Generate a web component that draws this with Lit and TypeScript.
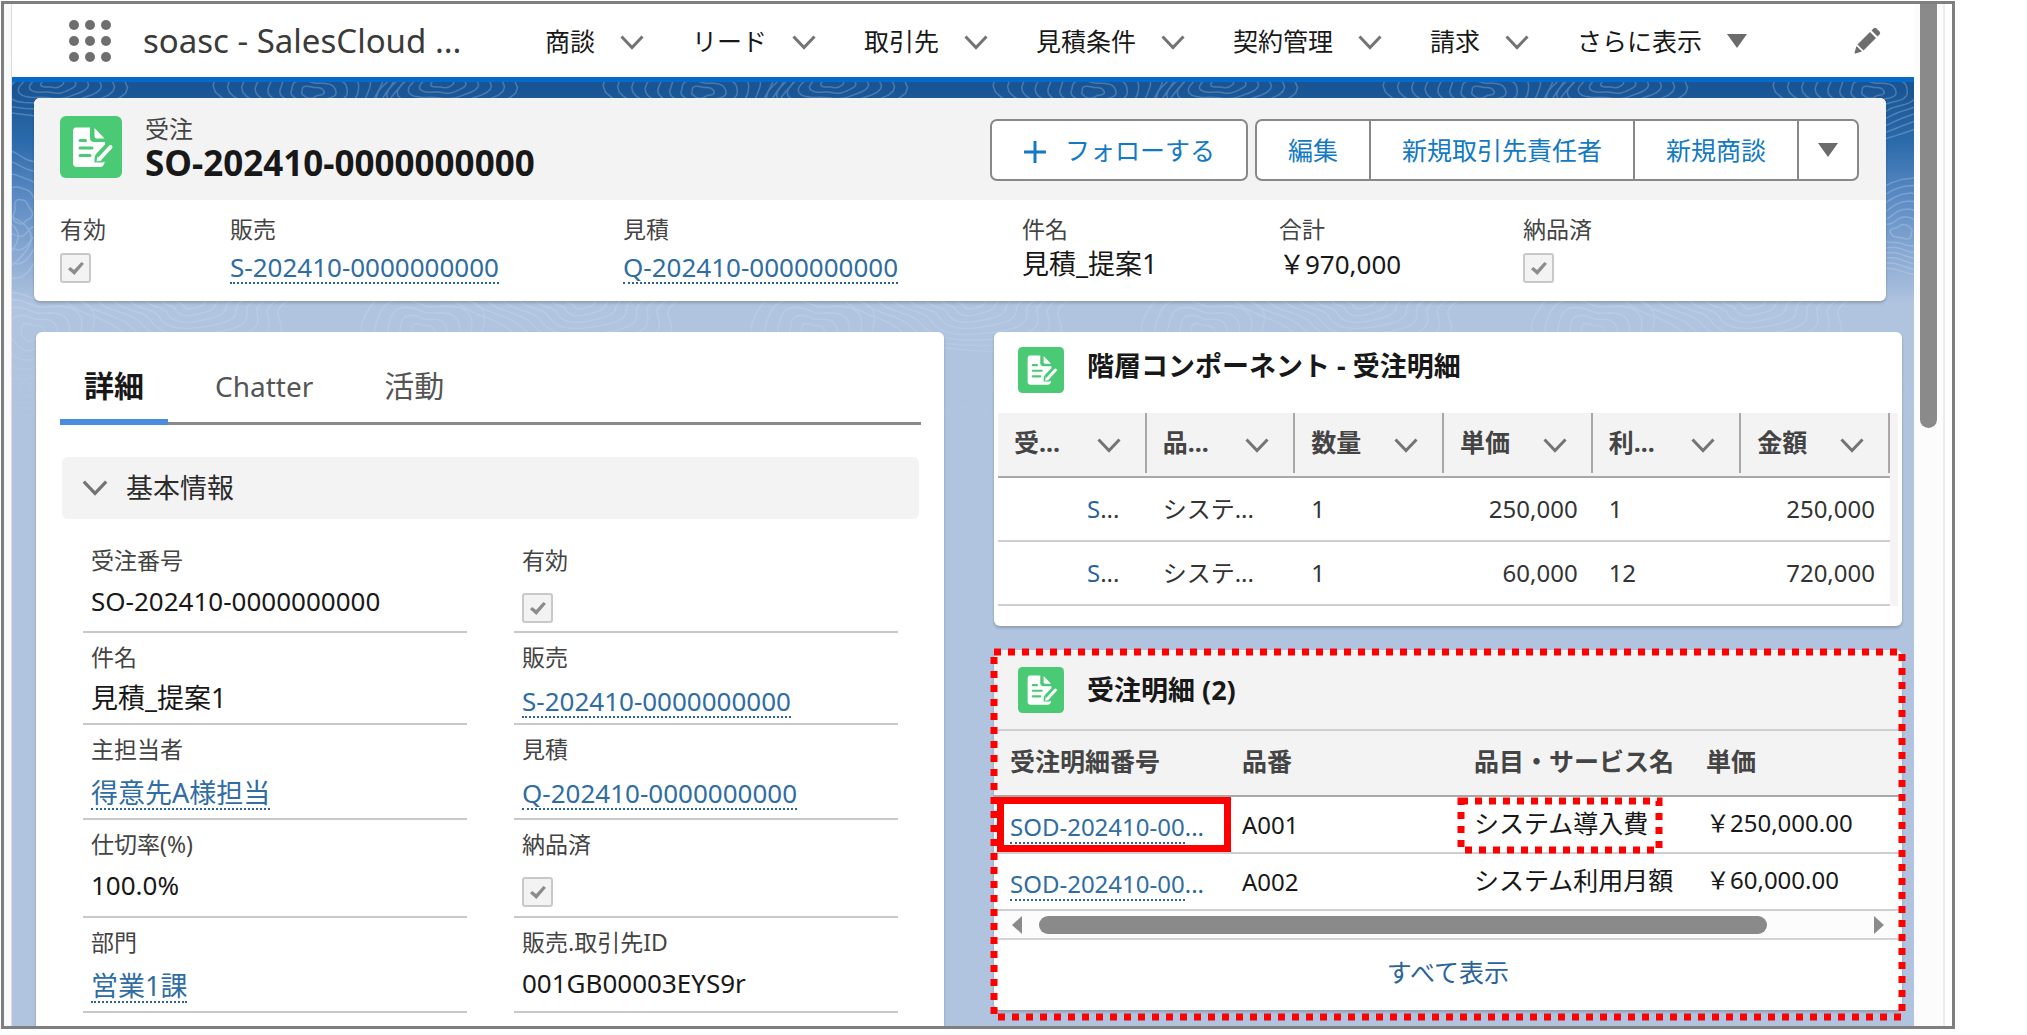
import { LitElement, html, svg, css, nothing } from "lit";
import { customElement } from "lit/decorators.js";
import { classMap } from "lit/directives/class-map.js";

type Kind = "text" | "link" | "check";

interface Field {
  id: string;
  label: string;
  kind: Kind;
  value?: string;
  /** Values written in Japanese are set slightly larger than codes and numbers. */
  jp?: boolean;
}

const NAV_ITEMS = ["商談", "リード", "取引先", "見積条件", "契約管理", "請求"];

const HIGHLIGHTS: Field[] = [
  { id: "h-active", label: "有効", kind: "check" },
  { id: "h-sale", label: "販売", kind: "link", value: "S-202410-0000000000" },
  { id: "h-quote", label: "見積", kind: "link", value: "Q-202410-0000000000" },
  { id: "h-subject", label: "件名", kind: "text", value: "見積_提案1", jp: true },
  { id: "h-total", label: "合計", kind: "text", value: "￥970,000" },
  { id: "h-delivered", label: "納品済", kind: "check" },
];

const DETAILS: Field[] = [
  { id: "d-number", label: "受注番号", kind: "text", value: "SO-202410-0000000000" },
  { id: "d-active", label: "有効", kind: "check" },
  { id: "d-subject", label: "件名", kind: "text", value: "見積_提案1", jp: true },
  { id: "d-sale", label: "販売", kind: "link", value: "S-202410-0000000000" },
  { id: "d-owner", label: "主担当者", kind: "link", value: "得意先A様担当", jp: true },
  { id: "d-quote", label: "見積", kind: "link", value: "Q-202410-0000000000" },
  { id: "d-rate", label: "仕切率(%)", kind: "text", value: "100.0%" },
  { id: "d-delivered", label: "納品済", kind: "check" },
  { id: "d-dept", label: "部門", kind: "link", value: "営業1課", jp: true },
  { id: "d-account-id", label: "販売.取引先ID", kind: "text", value: "001GB00003EYS9r" },
  { id: "d-account", label: "取引先", kind: "text", value: "" },
  { id: "d-sale-account", label: "販売.取引先", kind: "text", value: "" },
];

const TREE_COLUMNS = ["受...", "品...", "数量", "単価", "利...", "金額"];
const TREE_ROWS = [
  ["S...", "システ...", "1", "250,000", "1", "250,000"],
  ["S...", "システ...", "1", "60,000", "12", "720,000"],
];

const LINE_COLUMNS = ["受注明細番号", "品番", "品目・サービス名", "単価"];
const LINE_ROWS = [
  { no: "SOD-202410-00", code: "A001", name: "システム導入費", price: "￥250,000.00", marked: true },
  { no: "SOD-202410-00", code: "A002", name: "システム利用月額", price: "￥60,000.00", marked: false },
];

const chevron = html`<svg class="chevron" viewBox="0 0 24 15" aria-hidden="true">
  <path d="M1.5 1.5 12 12.5 22.5 1.5" fill="none" stroke="currentColor" stroke-width="3" />
</svg>`;

const triangle = html`<svg class="triangle" viewBox="0 0 20 14" aria-hidden="true">
  <path d="M0 0H20L10 14Z" fill="currentColor" />
</svg>`;

const recordIcon = html`<svg class="record-icon" viewBox="0 0 62 62" aria-hidden="true">
  <rect width="62" height="62" rx="6" fill="#4bca76" />
  <path
    d="M16 11.5H30V22Q30 26 34 26H45V28.500L36.500 37.500Q34.500 39.500 34.500 43V46.500H41.500Q43.500 46.500 44.500 45.500V47Q43.500 51 40 51H17Q13 51 13 47V15.500Q13 11.500 16 11.500Z"
    fill="#fff"
  />
  <path d="M34.500 12 44.500 22.500H36.500Q34.500 22.500 34.500 20.500Z" fill="#fff" />
  <path d="M20 24.500H25.500M20 32H32M20 39.500H30" stroke="#4bca76" stroke-width="3" stroke-linecap="round" />
  <path d="M40 42.500 50.500 31" stroke="#fff" stroke-width="4" stroke-linecap="round" />
  <path d="M36.500 45.500 37.500 40.500 41.500 44.500Z" fill="#fff" />
</svg>`;

/** One closed contour line around (cx, cy), bent by two low harmonics. */
function contour(cx: number, cy: number, rx: number, ry: number, phase: number): string {
  const points: string[] = [];
  for (let i = 0; i < 48; i++) {
    const a = (i / 48) * Math.PI * 2;
    const k = 1 + 0.13 * Math.sin(3 * a + phase) + 0.07 * Math.cos(5 * a - phase);
    points.push(`${(cx + rx * k * Math.cos(a)).toFixed(1)} ${(cy + ry * k * Math.sin(a)).toFixed(1)}`);
  }
  return `M${points.join("L")}Z`;
}

const HILLS = [
  { x: 40, y: 0, rx: 64, ry: 36, n: 6, phase: 0 },
  { x: 300, y: 10, rx: 90, ry: 44, n: 8, phase: 2 },
  { x: 160, y: 80, rx: 70, ry: 50, n: 6, phase: 4 },
  { x: 10, y: 130, rx: 44, ry: 60, n: 5, phase: 1 },
  { x: 330, y: 150, rx: 76, ry: 46, n: 7, phase: 5 },
  { x: 180, y: 220, rx: 110, ry: 48, n: 8, phase: 3 },
  { x: 20, y: 250, rx: 60, ry: 40, n: 5, phase: 2 },
];

const CONTOURS = HILLS.flatMap((h) =>
  Array.from({ length: h.n }, (_, i) => {
    const k = (i + 1) / h.n;
    return contour(h.x, h.y, h.rx * k, h.ry * k, h.phase + i / 6);
  }),
).join("");

@customElement("app-root")
export class AppRoot extends LitElement {
  static styles = css`
    :host {
      display: block;
      height: 100vh;
      box-sizing: border-box;
      padding: 1px 72px 6px 1px;
      background: #fff;
      color: #181818;
      font-family: "Noto Sans", "Noto Sans CJK JP", sans-serif;
      font-size: 26px;
      line-height: 36px;
      overflow: hidden;
    }
    *,
    *::before,
    *::after {
      box-sizing: border-box;
    }
    button,
    input {
      font: inherit;
      color: inherit;
      margin: 0;
    }
    button {
      border: 0;
      padding: 0;
      background: none;
      white-space: nowrap;
    }
    h1,
    h2,
    p {
      margin: 0;
    }
    a {
      color: #2a6499;
      text-decoration: none;
    }
    svg {
      display: block;
      flex: none;
    }
    .frame {
      display: flex;
      height: 100%;
      border: 3px solid #7f7f7f;
      overflow: hidden;
    }
    .gutter {
      flex: none;
      width: 8px;
      background: #fafafa;
      border-right: 1px solid #ddd;
    }
    .page {
      flex: 1;
      min-width: 0;
      display: flex;
      flex-direction: column;
    }
    .scroll {
      flex: none;
      width: 38px;
      padding-left: 6px;
      background: #fcfcfc;
      border-right: 7px solid #fff;
      box-shadow: inset -2px 0 #ececec;
    }
    .scroll-thumb {
      width: 17px;
      height: 424px;
      background: #8a8a8a;
      border-radius: 0 0 9px 9px;
    }

    /* global navigation */
    .nav {
      flex: none;
      display: flex;
      align-items: center;
      height: 78px;
      padding: 0 33px 0 57px;
      border-bottom: 5px solid #066acb;
      font-size: 25px;
    }
    .waffle {
      width: 42px;
      height: 42px;
    }
    .app-name {
      width: 434px;
      padding-left: 32px;
      font-size: 33px;
      line-height: 44px;
      color: #3a3a3a;
      white-space: nowrap;
    }
    .menu {
      display: flex;
      gap: 48px;
    }
    .menu-item {
      display: flex;
      align-items: center;
      gap: 25px;
    }
    .chevron {
      width: 24px;
      height: 15px;
      color: #747474;
    }
    .menu .chevron {
      margin-top: 4px;
    }
    .triangle {
      width: 20px;
      height: 14px;
      color: #6b6b6b;
    }
    .edit {
      margin-left: auto;
    }
    .pencil {
      width: 27px;
      height: 27px;
    }

    /* themed canvas */
    .canvas {
      position: relative;
      flex: 1;
      min-height: 0;
      padding: 16px 12px 0 24px;
      background: linear-gradient(#195594 8px, #2c6bab 60px, #5f8dc5 120px, #b0c4df 222px);
      overflow: hidden;
    }
    .terrain {
      position: absolute;
      inset: 0;
      width: 100%;
      height: 350px;
    }
    .card {
      background: #fff;
      border-radius: 6px;
      box-shadow: 0 2px 3px #0003;
    }
    .record {
      position: relative;
      margin: 0 16px 31px -2px;
      overflow: hidden;
    }
    .record-head {
      display: flex;
      align-items: center;
      height: 102px;
      padding: 0 27px 4px 26px;
      background: #f3f3f3;
    }
    .record-icon {
      width: 62px;
      height: 62px;
    }
    .record-title {
      flex: 1;
      padding: 2px 0 0 23px;
    }
    .record-title h1 {
      font-size: 35px;
      line-height: 38px;
      font-weight: 700;
    }
    .record-type {
      font-size: 24px;
      line-height: 30px;
      color: #444;
    }
    .actions {
      display: flex;
      gap: 7px;
      padding-top: 6px;
      font-size: 25px;
      color: #1279c4;
    }
    .group {
      display: flex;
      border: 2px solid #888;
      border-radius: 7px;
      background: #fff;
      overflow: hidden;
    }
    .group button {
      display: flex;
      align-items: center;
      gap: 18px;
      height: 58px;
      padding: 0 31px;
    }
    .group button + button {
      border-left: 2px solid #888;
    }
    .group .more {
      padding: 0 19px;
    }
    .plus {
      width: 24px;
      height: 24px;
      margin-top: 4px;
    }
    .highlights {
      display: grid;
      grid-template-columns: 170fr 393fr 399fr 257fr 244fr 336fr;
      height: 101px;
      padding: 12px 27px 0 26px;
    }
    .field {
      display: block;
      min-width: 0;
    }
    .label {
      display: block;
      font-size: 23px;
      line-height: 34px;
      color: #444;
    }
    .value {
      display: block;
      line-height: 40px;
      height: 40px;
      white-space: nowrap;
    }
    .jp .value {
      font-size: 27px;
    }
    .link {
      display: inline-block;
      line-height: 30px;
      color: #2f6da3;
      border-bottom: 2px dotted #2a6499;
    }
    .highlights .value {
      line-height: 36px;
    }
    .highlights .is-link .value,
    .highlights .is-check .value {
      padding-top: 3px;
    }
    .check {
      display: block;
      appearance: none;
      width: 31px;
      height: 30px;
      margin-top: 4px;
      padding: 7px 6px;
      border: 2px solid #c9c9c9;
      border-radius: 3px;
      background: #f3f3f3;
    }
    .check::before {
      content: "";
      display: block;
      width: 16px;
      height: 13px;
      background: #8c8c8c;
      clip-path: polygon(0 55%, 14% 38%, 38% 62%, 84% 0, 100% 14%, 40% 100%);
    }

    /* two-column body */
    .columns {
      position: relative;
      display: grid;
      grid-template-columns: 908fr 908fr;
      gap: 50px;
      height: 100%;
    }
    .detail {
      padding: 0 23px 0 24px;
      min-width: 0;
    }
    .tabs {
      display: flex;
      gap: 23px;
      height: 93px;
      border-bottom: 3px solid #8a8a8a;
    }
    .tab {
      height: 93px;
      padding: 20px 24px 6px;
      font-size: 30px;
      line-height: 40px;
      color: #555;
    }
    .tab.latin {
      font-size: 28px;
    }
    .tab.current {
      padding-bottom: 0;
      font-weight: 700;
      color: #181818;
      border-bottom: 6px solid #4a8ce0;
    }
    .section {
      display: flex;
      align-items: center;
      gap: 18px;
      width: calc(100% - 4px);
      height: 62px;
      margin: 32px 2px 17px;
      padding: 0 20px;
      border-radius: 6px;
      background: #f3f3f3;
      font-size: 27px;
      color: #2b2b2b;
    }
    .section .chevron {
      width: 26px;
      height: 16px;
    }
    .fields {
      display: grid;
      grid-template-columns: 1fr 1fr;
      grid-template-rows: 97px 92px 95px 98px 95px auto;
      column-gap: 47px;
      padding: 0 23px;
    }
    .fields .field {
      padding: 7px 8px 0;
      border-bottom: 2px solid #c9c9c9;
    }
    .fields .field:nth-last-child(-n + 2) {
      border: 0;
    }
    .fields .value {
      padding-top: 4px;
    }
    .fields .is-link .value {
      padding-top: 10px;
      line-height: 34px;
    }
    .fields .check {
      margin-top: 12px;
    }

    .side {
      display: flex;
      flex-direction: column;
      gap: 24px;
      min-width: 0;
    }
    .card-head {
      display: flex;
      align-items: center;
      gap: 23px;
      padding-left: 24px;
    }
    .card-head h2 {
      font-size: 27px;
      line-height: 36px;
    }
    .card-head .record-icon {
      width: 46px;
      height: 46px;
    }
    .tree {
      padding-bottom: 20px;
    }
    .tree .card-head {
      height: 81px;
      padding-bottom: 6px;
    }
    .tree .card-head h2 {
      padding-bottom: 8px;
    }
    table {
      width: 100%;
      table-layout: fixed;
      border-collapse: separate;
      border-spacing: 0;
      text-align: left;
      white-space: nowrap;
    }
    th,
    td {
      padding: 0 16px;
      font-size: 24px;
    }
    th {
      height: 66px;
      background: #f3f3f3;
      border-bottom: 2px solid #a8a8a8;
      font-size: 25px;
      color: #444;
    }
    td {
      border-bottom: 2px solid #cfcfcf;
    }
    .tree-body {
      margin: 0 4px;
      border-right: 8px solid #f5f3f5;
    }
    .tree th {
      height: 65px;
      padding: 0;
    }
    .tree-col {
      display: flex;
      align-items: center;
      justify-content: space-between;
      width: 100%;
      height: 60px;
      padding: 0 24px 2px 16px;
      margin-bottom: 3px;
      border-right: 2px solid #a8a8a8;
      font-weight: 700;
    }
    .tree-col .chevron {
      margin-top: 6px;
    }
    .tree td {
      height: 64px;
      color: #333;
    }
    .tree .num {
      padding-right: 15px;
      text-align: right;
    }
    .tree .first {
      padding-left: 89px;
    }
    .rest {
      color: #333;
    }

    .lines {
      position: relative;
    }
    .lines .card-head {
      height: 81px;
      background: #f3f3f3;
      border-bottom: 2px solid #cfcfcf;
      border-radius: 6px 6px 0 0;
    }
    .lines th {
      width: 232px;
      padding: 0 0 5px 16px;
    }
    .lines th:last-child {
      width: auto;
    }
    .lines td {
      position: relative;
      height: 57px;
      padding: 0 0 4px 16px;
    }
    .lines .code {
      padding-bottom: 0;
    }
    .lines .name {
      font-size: 25px;
    }
    .lines .number {
      padding: 5px 0 0 16px;
    }
    .solid-mark {
      position: absolute;
      inset: 0 -5px 0 3px;
      border: 7px solid #f00;
    }
    .dots {
      position: absolute;
      overflow: visible;
      pointer-events: none;
    }
    .dots rect {
      fill: none;
      stroke: #f00;
      stroke-width: 7px;
      stroke-dasharray: 7px 7px;
    }
    .dots-cell {
      inset: 4px 0 4px 3px;
      width: 198px;
      height: 49px;
    }
    .dots-card {
      inset: 2px 0 -7px;
      width: 100%;
      height: calc(100% + 5px);
    }
    .hscroll {
      display: flex;
      align-items: center;
      height: 29px;
      padding: 0 18px;
      background: #fcfcfc;
      border-bottom: 2px solid #d4d4d4;
      color: #8a8a8a;
    }
    .arrow {
      width: 10px;
      height: 18px;
    }
    .track {
      flex: 1;
      padding: 0 17px;
    }
    .thumb {
      width: 89%;
      height: 18px;
      border-radius: 9px;
      background: #8a8a8a;
    }
    .view-all {
      display: flex;
      justify-content: center;
      padding: 14px 0 20px;
      font-size: 25px;
    }
  `;

  private renderField(f: Field) {
    const classes = classMap({
      field: true,
      jp: !!f.jp,
      "is-link": f.kind === "link",
      "is-check": f.kind === "check",
    });
    if (f.kind === "check") {
      return html`<div class=${classes}>
        <label class="label" for=${f.id}>${f.label}</label>
        <span class="value"><input class="check" id=${f.id} type="checkbox" checked disabled /></span>
      </div>`;
    }
    return html`<div class=${classes}>
      <span class="label">${f.label}</span>
      <span class="value">
        ${f.kind === "link" ? html`<a class="link" href="#${f.id}">${f.value}</a>` : f.value}
      </span>
    </div>`;
  }

  private renderNav() {
    return html`<header class="nav">
      <button aria-label="アプリケーションランチャー">
        <svg class="waffle" viewBox="0 0 42 42" fill="#6e6e6e">
          ${[5, 21, 37].map((y) => [5, 21, 37].map((x) => svg`<circle cx=${x} cy=${y} r="5" />`))}
        </svg>
      </button>
      <span class="app-name">soasc - SalesCloud ...</span>
      <nav class="menu">
        ${NAV_ITEMS.map((t) => html`<button class="menu-item">${t}${chevron}</button>`)}
        <button class="menu-item">さらに表示${triangle}</button>
      </nav>
      <button class="edit" aria-label="編集">
        <svg class="pencil" viewBox="0 0 27 27" fill="#6e6e6e">
          <path d="M19.500 1.500Q21 0 22.500 1.500L25.500 4.500Q27 6 25.500 7.500L23.500 9.500 17.500 3.500Z" />
          <path d="M16 5 22 11 9.500 23.500 3.500 17.500Z" />
          <path d="M2.500 19 8 24.500 1.500 26.500Q.3 26.800.6 25.500Z" />
        </svg>
      </button>
    </header>`;
  }

  private renderRecord() {
    return html`<section class="card record">
      <div class="record-head">
        ${recordIcon}
        <div class="record-title">
          <p class="record-type">受注</p>
          <h1>SO-202410-0000000000</h1>
        </div>
        <div class="actions">
          <div class="group">
            <button>
              <svg class="plus" viewBox="0 0 24 24">
                <path d="M12 1V23M1 12H23" stroke="currentColor" stroke-width="3" />
              </svg>
              フォローする
            </button>
          </div>
          <div class="group">
            <button>編集</button>
            <button>新規取引先責任者</button>
            <button>新規商談</button>
            <button class="more" aria-label="その他">${triangle}</button>
          </div>
        </div>
      </div>
      <div class="highlights">${HIGHLIGHTS.map((f) => this.renderField(f))}</div>
    </section>`;
  }

  private renderDetail() {
    return html`<section class="card detail">
      <div class="tabs" role="tablist">
        <button class="tab current" role="tab" aria-selected="true">詳細</button>
        <button class="tab latin" role="tab">Chatter</button>
        <button class="tab" role="tab">活動</button>
      </div>
      <button class="section">${chevron}基本情報</button>
      <div class="fields">${DETAILS.map((f) => this.renderField(f))}</div>
    </section>`;
  }

  private renderTree() {
    return html`<section class="card tree">
      <div class="card-head">
        ${recordIcon}
        <h2>階層コンポーネント - 受注明細</h2>
      </div>
      <div class="tree-body">
        <table>
          <thead>
            <tr>
              ${TREE_COLUMNS.map((c) => html`<th><button class="tree-col">${c}${chevron}</button></th>`)}
            </tr>
          </thead>
          <tbody>
            ${TREE_ROWS.map(
              (row) => html`<tr>
                ${row.map((v, i) =>
                  i === 0
                    ? html`<td class="first"><a href="#item">${v[0]}</a><span class="rest">${v.slice(1)}</span></td>`
                    : html`<td class=${classMap({ num: i === 3 || i === 5 })}>${v}</td>`,
                )}
              </tr>`,
            )}
          </tbody>
        </table>
      </div>
    </section>`;
  }

  private renderLines() {
    return html`<section class="card lines">
      <div class="card-head">
        ${recordIcon}
        <h2>受注明細 (2)</h2>
      </div>
      <table>
        <thead>
          <tr>
            ${LINE_COLUMNS.map((c) => html`<th>${c}</th>`)}
          </tr>
        </thead>
        <tbody>
          ${LINE_ROWS.map(
            (r) => html`<tr>
              <td class="number">
                <a href="#${r.code}"><span class="link">${r.no}</span>...</a>
                ${r.marked ? html`<span class="solid-mark"></span>` : nothing}
              </td>
              <td class="code">${r.code}</td>
              <td class="name">
                ${r.name}
                ${r.marked
                  ? html`<svg class="dots dots-cell"><rect width="100%" height="100%" /></svg>`
                  : nothing}
              </td>
              <td>${r.price}</td>
            </tr>`,
          )}
        </tbody>
      </table>
      <div class="hscroll" aria-hidden="true">
        <svg class="arrow" viewBox="0 0 10 18"><path d="M10 0V18L0 9Z" fill="currentColor" /></svg>
        <div class="track"><div class="thumb"></div></div>
        <svg class="arrow" viewBox="0 0 10 18"><path d="M0 0V18L10 9Z" fill="currentColor" /></svg>
      </div>
      <a class="view-all" href="#all">すべて表示</a>
      <svg class="dots dots-card"><rect width="100%" height="100%" /></svg>
    </section>`;
  }

  render() {
    return html`<div class="frame">
      <div class="gutter"></div>
      <div class="page">
        ${this.renderNav()}
        <main class="canvas">
          <svg class="terrain" aria-hidden="true">
            <defs>
              <pattern id="contours" width="390" height="300" patternUnits="userSpaceOnUse">
                <path d=${CONTOURS} fill="none" stroke="#dbe8f8" stroke-width="1.5" />
                <path d=${CONTOURS} fill="none" stroke="#dbe8f8" stroke-width="1.5" transform="translate(-390 0)" />
                <path d=${CONTOURS} fill="none" stroke="#dbe8f8" stroke-width="1.5" transform="translate(390 0)" />
              </pattern>
              <linearGradient id="fade" x1="0" y1="0" x2="0" y2="1">
                <stop offset="0.6" stop-color="#fff" />
                <stop offset="1" stop-color="#000" />
              </linearGradient>
              <mask id="fade-mask"><rect width="100%" height="100%" fill="url(#fade)" /></mask>
            </defs>
            <rect width="100%" height="100%" fill="url(#contours)" opacity="0.25" mask="url(#fade-mask)" />
          </svg>
          ${this.renderRecord()}
          <div class="columns">
            ${this.renderDetail()}
            <div class="side">${this.renderTree()}${this.renderLines()}</div>
          </div>
        </main>
      </div>
      <div class="scroll" aria-hidden="true"><div class="scroll-thumb"></div></div>
    </div>`;
  }
}
